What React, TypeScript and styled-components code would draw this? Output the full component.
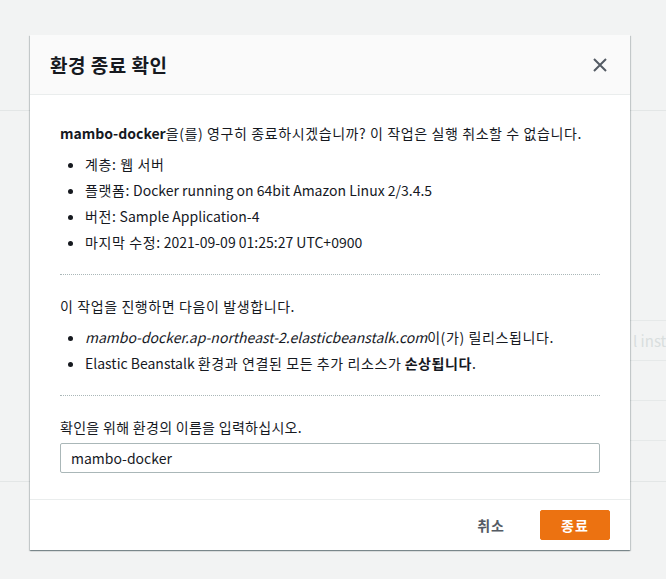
import React from "react";
import styled, { createGlobalStyle } from "styled-components";

const Global = createGlobalStyle`
  html, body { margin: 0; padding: 0; }
  body {
    background: #f2f3f3;
    font-family: "Noto Sans CJK KR", "Noto Sans", sans-serif;
    color: #16191f;
    -webkit-font-smoothing: antialiased;
  }
  * { box-sizing: border-box; }
`;

const Page = styled.div`
  position: relative;
  width: 666px;
  height: 579px;
  overflow: hidden;
  background: #f2f3f3;
`;

const PageHeader = styled.div`
  height: 111px;
  border-bottom: 1px solid #e3e6e6;
`;

const PageGap = styled.div`
  height: 209px;
`;

const BgTable = styled.div`
  margin-left: 300px;
  border-top: 1px solid #e6e9e9;
`;

const BgRow = styled.div<{ $last?: boolean }>`
  height: 40px;
  border-bottom: 1px solid ${(p) => (p.$last ? "transparent" : "#e6e9e9")};
  display: flex;
  align-items: center;
  white-space: nowrap;
  font-size: 15px;
  color: #d9dede;
  padding-left: 333px;
`;

const PageRule = styled.div`
  border-top: 1px solid #e3e6e6;
`;

const Overlay = styled.div`
  position: absolute;
  inset: 0;
  display: flex;
  align-items: flex-start;
  padding: 35px 0 0 30px;
`;

const Modal = styled.div`
  width: 600px;
  background: #ffffff;
  box-shadow: 0 1px 1px 0 rgba(0, 28, 36, 0.3), 1px 1px 1px 0 rgba(0, 28, 36, 0.15),
    -1px 1px 1px 0 rgba(0, 28, 36, 0.15);
`;

const Header = styled.div`
  height: 60px;
  background: #fafafa;
  border-bottom: 1px solid #eaeded;
  display: flex;
  align-items: center;
  justify-content: space-between;
  padding: 0 20px;
`;

const Title = styled.h2`
  margin: 0;
  font-size: 19px;
  font-weight: 700;
  line-height: 24px;
  letter-spacing: 0.5px;
  color: #16191f;
`;

const CloseButton = styled.button`
  border: 0;
  background: transparent;
  padding: 0;
  width: 20px;
  height: 20px;
  display: flex;
  align-items: center;
  justify-content: center;
  color: #545b64;
  cursor: pointer;
`;

const Body = styled.div`
  padding: 27px 30px 26px;
`;

const Section = styled.div`
  padding-bottom: 21px;
  border-bottom: 1px dotted #aab7b8;
  margin-bottom: 20px;
`;

const Para = styled.p<{ $ko?: boolean }>`
  margin: 0;
  font-size: 14px;
  line-height: 22px;
  color: #16191f;
  white-space: nowrap;
  letter-spacing: ${(p) => (p.$ko ? "0.6px" : "0")};
`;

const Ko = styled.span`
  letter-spacing: 0.6px;
`;

const List = styled.ul`
  margin: 9px 0 0;
  padding-left: 25px;
  list-style: disc;
`;

const Item = styled.li`
  font-size: 14px;
  line-height: 22px;
  color: #16191f;
  & + & { margin-top: 4px; }
`;

const Label = styled.label`
  display: block;
  font-size: 14px;
  line-height: 22px;
  letter-spacing: 0.3px;
  color: #16191f;
  margin-bottom: 5px;
`;

const Input = styled.input`
  display: block;
  width: 100%;
  height: 30px;
  border: 1px solid #aab7b8;
  border-radius: 2px;
  padding: 0 10px;
  font-family: inherit;
  font-size: 14px;
  color: #16191f;
  background: #fff;
  outline: none;
`;

const Footer = styled.div`
  border-top: 1px solid #eaeded;
  padding: 10px 20px;
  display: flex;
  justify-content: flex-end;
  align-items: center;
  gap: 16px;
`;

const Button = styled.button<{ $primary?: boolean }>`
  height: 30px;
  min-width: ${(p) => (p.$primary ? "70px" : "auto")};
  padding: 0 ${(p) => (p.$primary ? "20px" : "18px")};
  border-radius: 2px;
  border: 1px solid ${(p) => (p.$primary ? "#ec7211" : "transparent")};
  background: ${(p) => (p.$primary ? "#ec7211" : "transparent")};
  color: ${(p) => (p.$primary ? "#ffffff" : "#545b64")};
  font-family: inherit;
  font-size: 14px;
  font-weight: 700;
  line-height: 22px;
  letter-spacing: 1px;
  cursor: pointer;
`;

export default function App() {
  return (
    <>
      <Global />
      <Page>
        <PageHeader />
        <PageGap />
        <BgTable>
          <BgRow>l instances</BgRow>
          <BgRow />
          <BgRow />
          <BgRow $last />
        </BgTable>
        <PageRule />
        <Overlay>
          <Modal role="dialog" aria-label="환경 종료 확인">
            <Header>
              <Title>환경 종료 확인</Title>
              <CloseButton aria-label="닫기">
                <svg width="16" height="16" viewBox="0 0 16 16" fill="none">
                  <path d="M2 2L14 14M14 2L2 14" stroke="currentColor" strokeWidth="2" />
                </svg>
              </CloseButton>
            </Header>
            <Body>
              <Section>
                <Para>
                  <b>mambo-docker</b>
                  <Ko>을(를) 영구히 종료하시겠습니까? 이 작업은 실행 취소할 수 없습니다.</Ko>
                </Para>
                <List>
                  <Item>
                    <Ko>계층: 웹 서버</Ko>
                  </Item>
                  <Item>
                    <Ko>플랫폼:</Ko> Docker running on 64bit Amazon Linux 2/3.4.5
                  </Item>
                  <Item>
                    <Ko>버전:</Ko> Sample Application-4
                  </Item>
                  <Item>
                    <Ko>마지막 수정:</Ko> 2021-09-09 01:25:27 UTC+0900
                  </Item>
                </List>
              </Section>
              <Section>
                <Para $ko>이 작업을 진행하면 다음이 발생합니다.</Para>
                <List>
                  <Item>
                    <i>mambo-docker.ap-northeast-2.elasticbeanstalk.com</i>
                    <Ko>이(가) 릴리스됩니다.</Ko>
                  </Item>
                  <Item>
                    Elastic Beanstalk <Ko>환경과 연결된 모든 추가 리소스가</Ko>{" "}
                    <b>
                      <Ko>손상됩니다</Ko>
                    </b>
                    .
                  </Item>
                </List>
              </Section>
              <Label htmlFor="envname">확인을 위해 환경의 이름을 입력하십시오.</Label>
              <Input id="envname" defaultValue="mambo-docker" />
            </Body>
            <Footer>
              <Button>취소</Button>
              <Button $primary>종료</Button>
            </Footer>
          </Modal>
        </Overlay>
      </Page>
    </>
  );
}
